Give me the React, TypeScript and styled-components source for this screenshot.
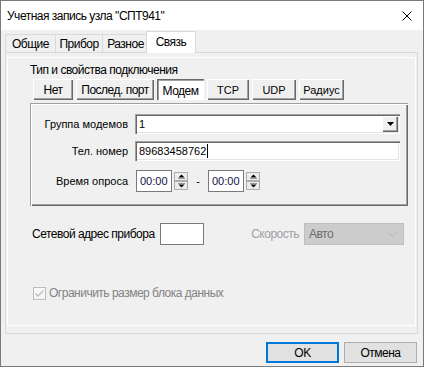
import React from 'react';
import styled, { createGlobalStyle } from 'styled-components';

const UI_FONT = '"Segoe UI", "Liberation Sans", Arial, sans-serif';
const CLASSIC_FONT = 'Tahoma, "Liberation Sans", sans-serif';

const GlobalStyle = createGlobalStyle`
  html, body {
    margin: 0;
    padding: 0;
    background: #fff;
  }
  body {
    font-family: ${UI_FONT};
    font-size: 12px;
    letter-spacing: -0.5px;
    color: #000;
  }
`;

const Window = styled.div`
  box-sizing: border-box;
  width: 424px;
  height: 367px;
  border: 1px solid #7a7a7a;
  background: #f0f0f0;
  display: flex;
  flex-direction: column;
`;

const TitleBar = styled.div`
  height: 29px;
  flex: none;
  background: #fff;
  display: flex;
  align-items: center;
  justify-content: space-between;
  padding: 0 11px 0 6px;
`;

const Title = styled.span`
  font-size: 12px;
  line-height: 16px;
`;

const TabStrip = styled.div`
  height: 22px;
  flex: none;
  display: flex;
  align-items: flex-end;
  padding-left: 4px;
`;

const Tab = styled.div<{ $w: number; $active?: boolean }>`
  box-sizing: border-box;
  width: ${(p) => p.$w}px;
  height: ${(p) => (p.$active ? 22 : 18)}px;
  margin-left: ${(p) => (p.$active ? -3 : -1)}px;
  margin-bottom: ${(p) => (p.$active ? -1 : 0)}px;
  border: 1px solid #d9d9d9;
  border-bottom: none;
  background: ${(p) => (p.$active ? '#fff' : '#f0f0f0')};
  position: relative;
  z-index: ${(p) => (p.$active ? 1 : 0)};
  display: flex;
  align-items: center;
  justify-content: center;
  line-height: 16px;
  padding-bottom: ${(p) => (p.$active ? 1 : 0)}px;

  &:first-child {
    margin-left: 0;
  }
`;

const TabPage = styled.div`
  box-sizing: border-box;
  width: 413px;
  height: 282px;
  margin-left: 4px;
  flex: none;
  border: 1px solid #d9d9d9;
  background: #f0f0f0;
  padding: 4px 1px 7px 1px;
  display: flex;
`;

const Frame = styled.div`
  flex: 1;
  border: 1px solid #fff;
  padding: 4px 0 0 22px;
  display: flex;
  flex-direction: column;
`;

const Heading = styled.div`
  line-height: 16px;
  height: 16px;
`;

const ConnRow = styled.div`
  display: flex;
  gap: 3px;
  margin: 1px 0 0 3px;
`;

const ConnButton = styled.div<{ $w: number; $pressed?: boolean; $classic?: boolean }>`
  box-sizing: border-box;
  width: ${(p) => p.$w}px;
  height: 21px;
  display: flex;
  align-items: center;
  justify-content: center;
  white-space: nowrap;
  font-family: ${(p) => (p.$classic ? CLASSIC_FONT : UI_FONT)};
  font-size: ${(p) => (p.$classic ? 11 : 12)}px;
  letter-spacing: ${(p) => (p.$classic ? 0 : -0.5)}px;
  background: ${(p) => (p.$pressed ? '#fff' : '#f0f0f0')};
  box-shadow: ${(p) =>
    p.$pressed
      ? 'inset 1px 1px 0 #696969, inset 2px 2px 0 #a0a0a0, inset -1px -1px 0 #fff'
      : 'inset 1px 1px 0 #fff, inset -1px -1px 0 #696969, inset -2px -2px 0 #a0a0a0'};
  padding-top: ${(p) => (p.$pressed ? 2 : 0)}px;
`;

const GroupBox = styled.div`
  box-sizing: border-box;
  width: 378px;
  height: 103px;
  margin-top: 3px;
  padding: 11px 8px 0 0;
  box-shadow: inset 1px 1px 0 #a0a0a0, inset 2px 2px 0 #fff,
    inset -1px -1px 0 #696969, inset -2px -2px 0 #a0a0a0;
  display: grid;
  grid-template-columns: 98px 1fr;
  grid-auto-rows: min-content;
  column-gap: 7px;
  row-gap: 7px;
  align-items: center;
  font-family: ${CLASSIC_FONT};
  font-size: 11px;
  letter-spacing: 0;
`;

const FieldLabel = styled.div<{ $offset?: number }>`
  text-align: right;
  margin-top: ${(p) => p.$offset ?? 0}px;
`;

const SunkenField = styled.div`
  box-sizing: border-box;
  height: 20px;
  background: #fff;
  box-shadow: inset 1px 1px 0 #a0a0a0, inset 2px 2px 0 #696969,
    inset -1px -1px 0 #fff, inset -2px -2px 0 #e3e3e3;
  display: flex;
  align-items: center;
  padding: 0 2px 0 4px;
`;

const DropButton = styled.div`
  box-sizing: border-box;
  width: 16px;
  height: 16px;
  margin-left: auto;
  background: #f0f0f0;
  box-shadow: inset 1px 1px 0 #fff, inset -1px -1px 0 #696969,
    inset -2px -2px 0 #a0a0a0;
  display: flex;
  align-items: center;
  justify-content: center;
`;

const Caret = styled.span`
  width: 1px;
  height: 14px;
  background: #000;
  margin-left: 1px;
`;

const TimeRow = styled.div`
  display: flex;
  align-items: center;
  margin: 2px 0 0 1px;
`;

const TimeBox = styled.div`
  box-sizing: border-box;
  width: 36px;
  height: 22px;
  border: 1px solid #7a7a7a;
  background: #fff;
  display: flex;
  align-items: center;
  padding-left: 3px;
  color: #10104a;
`;

const Spinner = styled.div`
  width: 14px;
  height: 18px;
  margin-left: 2px;
  display: flex;
  flex-direction: column;
  justify-content: space-between;
`;

const SpinHalf = styled.div`
  box-sizing: border-box;
  height: 9px;
  border: 1px solid #adadad;
  background: #ececec;
  display: flex;
  align-items: center;
  justify-content: center;
`;

const Dash = styled.span`
  width: 20px;
  text-align: center;
`;

const AddressRow = styled.div`
  display: flex;
  align-items: center;
  height: 22px;
  margin: 17px 11px 0 2px;
  white-space: nowrap;
`;

const AddressLabel = styled.span`
  width: 128px;
  flex: none;
`;

const FlatInput = styled.div`
  box-sizing: border-box;
  width: 44px;
  height: 22px;
  border: 1px solid #7a7a7a;
  background: #fff;
`;

const SpeedLabel = styled.span`
  flex: 1;
  text-align: right;
  margin-right: 5px;
  color: #a0a0a0;
`;

const DisabledSelect = styled.div`
  box-sizing: border-box;
  width: 100px;
  height: 22px;
  border: 1px solid #bfbfbf;
  background: #cccccc;
  color: #6d6d6d;
  display: flex;
  align-items: center;
  justify-content: space-between;
  padding: 0 6px 0 4px;
`;

const CheckRow = styled.label`
  display: flex;
  align-items: center;
  gap: 3px;
  margin: 42px 0 0 3px;
  color: #838383;
  line-height: 13px;
  white-space: nowrap;
`;

const Footer = styled.div`
  flex: 1;
  display: flex;
  justify-content: flex-end;
  align-items: flex-start;
  gap: 5px;
  padding: 8px 6px 0 0;
`;

const DialogButton = styled.div<{ $default?: boolean }>`
  box-sizing: border-box;
  width: 73px;
  height: 21px;
  background: #e1e1e1;
  border: ${(p) => (p.$default ? '2px solid #0078d7' : '1px solid #adadad')};
  display: flex;
  align-items: center;
  justify-content: center;
`;

const CloseIcon = () => (
  <svg width="10" height="10" viewBox="0 0 10 10">
    <path d="M0.5 0.5 L9.5 9.5 M9.5 0.5 L0.5 9.5" stroke="#000" strokeWidth="1" fill="none" />
  </svg>
);

const DownTriangle = () => (
  <svg width="7" height="4" viewBox="0 0 7 4">
    <path d="M0 0 H7 L3.5 4 Z" fill="#000" />
  </svg>
);

const SpinUp = () => (
  <svg width="7" height="5" viewBox="0 0 7 5">
    <path d="M0.5 3.5 L3.5 0.5 L6.5 3.5 Z" fill="#000" />
    <path d="M0 4.5 H7" stroke="#000" strokeWidth="1" opacity="0.35" />
  </svg>
);

const SpinDown = () => (
  <svg width="7" height="5" viewBox="0 0 7 5">
    <path d="M0 0.5 H7" stroke="#000" strokeWidth="1" opacity="0.35" />
    <path d="M0.5 1.5 L6.5 1.5 L3.5 4.5 Z" fill="#000" />
  </svg>
);

const Chevron = () => (
  <svg width="9" height="5" viewBox="0 0 9 5">
    <path d="M0.5 0.5 L4.5 4.5 L8.5 0.5" stroke="#b4b4b4" strokeWidth="1" fill="none" />
  </svg>
);

const CheckBox = () => (
  <svg width="13" height="13" viewBox="0 0 13 13">
    <rect x="0.5" y="0.5" width="12" height="12" fill="#f7f7f7" stroke="#bcbcbc" />
    <path d="M2.5 6.5 L5 9 L10.5 3.5" stroke="#bcbcbc" strokeWidth="1.4" fill="none" />
  </svg>
);

const TimeSpin = ({ value }: { value: string }) => (
  <>
    <TimeBox>{value}</TimeBox>
    <Spinner>
      <SpinHalf>
        <SpinUp />
      </SpinHalf>
      <SpinHalf>
        <SpinDown />
      </SpinHalf>
    </Spinner>
  </>
);

const tabs = [
  { label: 'Общие', w: 51 },
  { label: 'Прибор', w: 48 },
  { label: 'Разное', w: 47 },
  { label: 'Связь', w: 50, active: true },
];

const connButtons = [
  { label: 'Нет', w: 40 },
  { label: 'Послед. порт', w: 78 },
  { label: 'Модем', w: 47, pressed: true },
  { label: 'TCP', w: 42, classic: true },
  { label: 'UDP', w: 44, classic: true },
  { label: 'Радиус', w: 45, classic: true },
];

export default function App() {
  return (
    <>
      <GlobalStyle />
      <Window>
        <TitleBar>
          <Title>Учетная запись узла "СПТ941"</Title>
          <CloseIcon />
        </TitleBar>

        <TabStrip>
          {tabs.map((t) => (
            <Tab key={t.label} $w={t.w} $active={t.active}>
              {t.label}
            </Tab>
          ))}
        </TabStrip>

        <TabPage>
          <Frame>
            <Heading>Тип и свойства подключения</Heading>
            <ConnRow>
              {connButtons.map((b) => (
                <ConnButton key={b.label} $w={b.w} $pressed={b.pressed} $classic={b.classic}>
                  {b.label}
                </ConnButton>
              ))}
            </ConnRow>

            <GroupBox>
              <FieldLabel>Группа модемов</FieldLabel>
              <SunkenField>
                1
                <DropButton>
                  <DownTriangle />
                </DropButton>
              </SunkenField>

              <FieldLabel>Тел. номер</FieldLabel>
              <SunkenField>
                89683458762
                <Caret />
              </SunkenField>

              <FieldLabel $offset={2}>Время опроса</FieldLabel>
              <TimeRow>
                <TimeSpin value="00:00" />
                <Dash>-</Dash>
                <TimeSpin value="00:00" />
              </TimeRow>
            </GroupBox>

            <AddressRow>
              <AddressLabel>Сетевой адрес прибора</AddressLabel>
              <FlatInput />
              <SpeedLabel>Скорость</SpeedLabel>
              <DisabledSelect>
                Авто
                <Chevron />
              </DisabledSelect>
            </AddressRow>

            <CheckRow>
              <CheckBox />
              Ограничить размер блока данных
            </CheckRow>
          </Frame>
        </TabPage>

        <Footer>
          <DialogButton $default>OK</DialogButton>
          <DialogButton>Отмена</DialogButton>
        </Footer>
      </Window>
    </>
  );
}
